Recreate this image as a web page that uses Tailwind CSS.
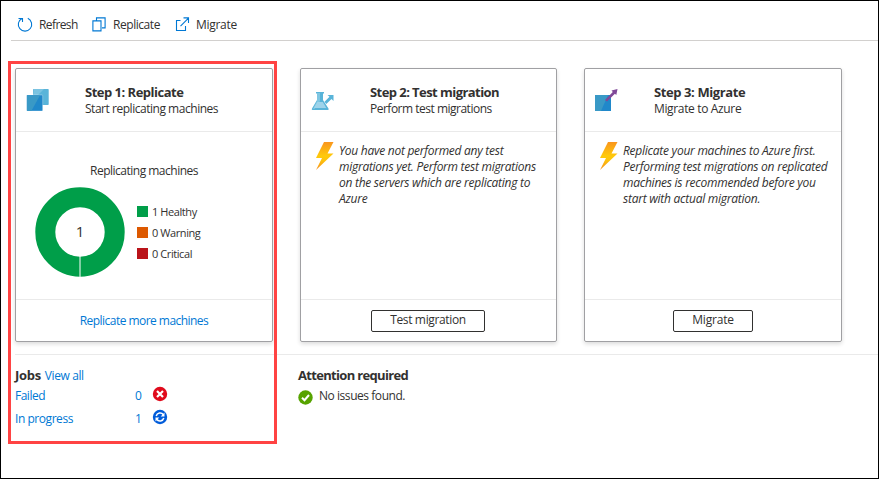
<!DOCTYPE html>
<html lang="en">
<head>
<meta charset="utf-8">
<title>Migration steps</title>
<script src="https://cdn.jsdelivr.net/npm/@tailwindcss/browser@4"></script>
</head>
<body class="bg-white">
<div class="relative flex h-[479px] w-[879px] flex-col overflow-hidden border border-black bg-white font-['Open_Sans','Noto_Sans',sans-serif] text-[12px] leading-4 text-[#323130]">
  <nav class="ml-[10px] flex h-10 shrink-0 items-center border-b border-[#d2d0ce] pt-[8px] whitespace-nowrap">
    <a class="ml-[6px] flex w-[75px] items-center gap-[6px]">
      <svg class="size-4 shrink-0" viewBox="0 0 16 16" fill="none" stroke="#0078d4" stroke-width="1.1"><path d="M10.8 1.300A6.700 6.700 0 1 1 5 1.400M1.500 1.500h4V5"/></svg>
      <span class="pt-px tracking-[-0.6px]">Refresh</span>
    </a>
    <a class="flex w-[83px] items-center gap-[6px]">
      <svg class="size-[15px] shrink-0" viewBox="0 0 15 15" fill="none" stroke="#0078d4" stroke-width="1.1"><path d="M4.500 3.500V.900h8.600v10H10M.900 3.900H9v10H.900z"/></svg>
      <span class="pt-px tracking-[-0.45px]">Replicate</span>
    </a>
    <a class="flex items-center gap-[6px]">
      <svg class="size-[15px] shrink-0" viewBox="0 0 15 15" fill="none" stroke="#0078d4" stroke-width="1.1"><path d="M5.500 3.500H1.500v10h9V9M5.500 9.200l8-8M8.500.900h5v5"/></svg>
      <span class="pt-px tracking-[-0.3px]">Migrate</span>
    </a>
  </nav>

  <main class="flex shrink-0 pt-[27px] pl-[14px]">
    <section class="mr-[27px] flex h-[274px] w-[258px] flex-col rounded-[2px] border border-[#a0a0a3] shadow-[0_2px_4px_rgba(0,0,0,0.14)]">
      <header class="flex h-[63px] shrink-0 border-b border-[#eaeaea] pt-[15px] pl-[10px]">
        <svg class="mt-[4px] mr-[36px] size-6 shrink-0" viewBox="0 0 24 24"><rect x="7" y="1" width="15.700" height="16" rx=".7" fill="#59b4d9"/><path d="M7.700 1H18l-6 6H7z" fill="#7ac3e1"/><rect x=".7" y="7" width="16" height="16" rx=".7" fill="#2088ca" stroke="#fff" stroke-opacity=".5" stroke-width=".6"/><path d="M1 7.300h13L5.500 22.700H1z" fill="#3999c6"/></svg>
        <div class="-ml-px whitespace-nowrap">
          <h2 class="text-[13px] leading-[17px] font-bold tracking-[-0.5px]">Step 1: Replicate</h2>
          <p class="tracking-[-0.47px]">Start replicating machines</p>
        </div>
      </header>
      <div class="h-[167px] shrink-0 pt-[31px]">
        <h3 class="pl-[74px] tracking-[-0.5px]">Replicating machines</h3>
        <div class="mt-[8px] flex items-center pl-[19px]">
          <svg class="size-[90px] shrink-0" viewBox="0 0 90 90"><circle cx="45" cy="45" r="34.700" fill="none" stroke="#009e49" stroke-width="20"/><path d="M45 69v21" stroke="#fff" stroke-width="1"/><text x="45" y="50" text-anchor="middle" font-size="15" fill="#323130">1</text></svg>
          <ul class="ml-[12px] text-[11px] leading-[21px] tracking-[-0.42px]">
            <li class="flex items-center gap-[4px]"><i class="size-[11px] bg-[#009e49]"></i>1 Healthy</li>
            <li class="flex items-center gap-[4px]"><i class="size-[11px] bg-[#dd5900]"></i>0 Warning</li>
            <li class="flex items-center gap-[4px]"><i class="size-[11px] bg-[#ba141a]"></i>0 Critical</li>
          </ul>
        </div>
      </div>
      <footer class="flex grow items-center justify-center border-t border-[#eaeaea]">
        <a class="tracking-[-0.54px] text-[#0078d4]">Replicate more machines</a>
      </footer>
    </section>

    <section class="mr-[27px] flex h-[274px] w-[257px] flex-col rounded-[2px] border border-[#a0a0a3] shadow-[0_2px_4px_rgba(0,0,0,0.14)]">
      <header class="flex h-[63px] shrink-0 border-b border-[#eaeaea] pt-[15px] pl-[10px]">
        <svg class="mt-[5px] mr-[36px] size-6 shrink-0" viewBox="0 0 24 24"><path d="M5 3h8v1.500h-1V11l5.500 8.500q.7 1.500-.8 1.500H1.700q-1.500 0-.7-1.500L6 11V4.500H5z" fill="#59b4d9"/><path d="M6.300 13h5.500l3.500 6H2.900z" fill="#9ed3ea"/><path d="M6 4h3v8l-5.500 8H2l4-8z" fill="#9fd5ea" opacity=".55"/><path d="m13.500 12.800 5-5-2-1.700h6v6l-2-2-5.200 5z" fill="#59b4d9"/></svg>
        <div class="-ml-px whitespace-nowrap">
          <h2 class="text-[13px] leading-[17px] font-bold tracking-[-0.56px]">Step 2: Test migration</h2>
          <p class="tracking-[-0.5px]">Perform test migrations</p>
        </div>
      </header>
      <div class="flex h-[167px] shrink-0 pt-[11px] pl-[14px]">
        <svg class="-mt-px mr-[4px] h-7 w-5 shrink-0" viewBox="0 0 20 28"><defs><linearGradient id="bolt" x1="0" y1="0" x2="0" y2="1"><stop stop-color="#f9951e"/><stop offset=".5" stop-color="#ffca0a"/><stop offset=".65" stop-color="#fdc30c"/><stop offset="1" stop-color="#f78d1e"/></linearGradient></defs><path d="M9 0h9.500l-6 11.500h6L1 28l6-12H1z" fill="url(#bolt)"/></svg>
        <p class="tracking-[-0.27px] whitespace-nowrap italic">You have not performed any test<br>migrations yet. Perform test migrations<br>on the servers which are replicating to<br>Azure</p>
      </div>
      <footer class="flex grow items-center justify-center border-t border-[#eaeaea] pr-px">
        <button class="h-[22px] w-[114px] rounded-[2px] border border-[#323130] pb-px leading-[18px] tracking-[-0.35px]">Test migration</button>
      </footer>
    </section>

    <section class="flex h-[274px] w-[258px] flex-col rounded-[2px] border border-[#a0a0a3] shadow-[0_2px_4px_rgba(0,0,0,0.14)]">
      <header class="flex h-[63px] shrink-0 border-b border-[#eaeaea] pt-[15px] pl-[10px]">
        <svg class="mt-[4px] mr-[36px] size-6 shrink-0" viewBox="0 0 24 24"><rect y="7" width="16" height="16" fill="#2088ca"/><path d="M0 7h13L6 23H0z" fill="#3999c6"/><path d="m10 12 7.800-8-1.300-1.500L22.500 1l-1.200 6-1.400-1.300L12 13.500z" fill="#804998"/></svg>
        <div class="-ml-px whitespace-nowrap">
          <h2 class="text-[13px] leading-[17px] font-bold tracking-[-0.4px]">Step 3: Migrate</h2>
          <p class="tracking-[-0.35px]">Migrate to Azure</p>
        </div>
      </header>
      <div class="flex h-[167px] shrink-0 pt-[11px] pl-[14px]">
        <svg class="-mt-px mr-[4px] h-7 w-5 shrink-0" viewBox="0 0 20 28"><path d="M9 0h9.500l-6 11.500h6L1 28l6-12H1z" fill="url(#bolt)"/></svg>
        <p class="tracking-[-0.25px] whitespace-nowrap italic">Replicate your machines to Azure first.<br>Performing test migrations on replicated<br>machines is recommended before you<br>start with actual migration.</p>
      </div>
      <footer class="flex grow items-center justify-center border-t border-[#eaeaea]">
        <button class="h-[22px] w-[80px] rounded-[2px] border border-[#323130] pb-px leading-[18px] tracking-[-0.2px]">Migrate</button>
      </footer>
    </section>
  </main>

  <div class="mt-[12px] ml-[14px] flex border-t border-[#eaeaea] pt-[12px] whitespace-nowrap">
    <section class="w-[283px]">
      <h2 class="flex gap-[4px] leading-[17px]"><span class="text-[13px] font-bold tracking-[-0.3px]">Jobs</span><a class="tracking-[-0.4px] text-[#0078d4]">View all</a></h2>
      <div class="mt-[2px] flex h-[23px] text-[#0078d4]">
        <span class="w-[120px] pt-[2px] tracking-[-0.5px]">Failed</span><span class="w-[17px] pt-[2px]">0</span>
        <svg class="size-4" viewBox="0 0 16 16"><circle cx="8" cy="8" r="7.200" fill="#e00b1c"/><path d="m5 5 6 6m0-6-6 6" stroke="#fff" stroke-width="2.200"/></svg>
      </div>
      <div class="flex h-[23px] text-[#0078d4]">
        <span class="w-[120px] pt-[2px] tracking-[-0.45px]">In progress</span><span class="w-[17px] pt-[2px]">1</span>
        <svg class="size-4" viewBox="0 0 16 16"><circle cx="8" cy="8" r="7.200" fill="#015cda"/><path d="M4.200 7A4 4 0 0 1 11.300 5.700M11.800 9A4 4 0 0 1 4.700 10.300" fill="none" stroke="#fff" stroke-width="1.500"/><path d="M12.500 3.500v4H8.700zM3.500 12.500v-4h3.800z" fill="#fff"/></svg>
      </div>
    </section>
    <section>
      <h2 class="text-[13px] leading-[17px] font-bold tracking-[-0.68px]">Attention required</h2>
      <p class="mt-[4px] flex gap-[6px] tracking-[-0.45px]">
        <svg class="mt-[2px] size-[15px]" viewBox="0 0 15 15"><circle cx="7.500" cy="7.500" r="7.200" fill="#57a300"/><path d="m4 7.700 2.500 2.500L11 5" fill="none" stroke="#fff" stroke-width="2"/></svg>
        <span>No issues found.</span>
      </p>
    </section>
  </div>

  <div class="pointer-events-none absolute top-[60px] left-[7px] h-[383px] w-[269px] border-3 border-[#ff4343]"></div>
</div>
</body>
</html>
